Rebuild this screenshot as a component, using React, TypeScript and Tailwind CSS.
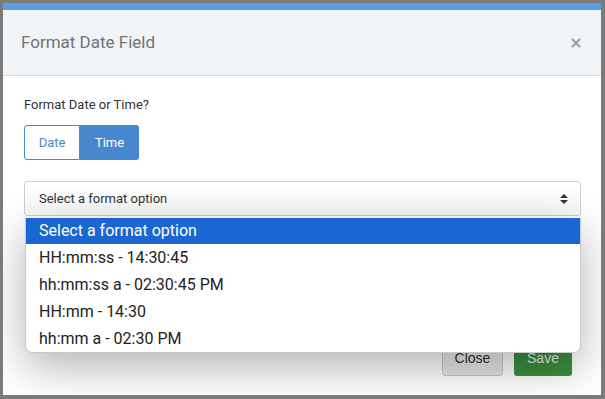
const options = [
  "HH:mm:ss - 14:30:45",
  "hh:mm:ss a - 02:30:45 PM",
  "HH:mm - 14:30",
  "hh:mm a - 02:30 PM",
];

const App = () => {
  return (
    <div className="w-[605px] h-[399px] bg-[#7b7b7b] pt-[3px] pl-[3px] pr-[4px] pb-[4px] overflow-hidden" style={{ fontFamily: "Roboto, 'Liberation Sans', sans-serif" }}>
      <div className="h-full bg-white flex flex-col relative overflow-hidden">
        <div className="h-[7px] bg-[#5b9de1]" />
        <div className="h-[66px] bg-[#f0f4f7] border-b border-[#d3d8dc] flex items-center justify-between pl-[18px] pr-[19px]">
          <span className="text-[17px] text-[#737373]">Format Date Field</span>
          <svg width="10" height="10" viewBox="0 0 10 10" className="mr-[1px]">
            <path d="M1 1 L9 9 M9 1 L1 9" stroke="#9a9a9a" strokeWidth="2" />
          </svg>
        </div>

        <div className="flex flex-col pl-[21px] pr-[20px] pt-[21px]">
          <div className="text-[13px] leading-4 text-[#333]">Format Date or Time?</div>
          <div className="flex mt-[12px]">
            <button className="h-[35px] w-[56px] border border-[#4a88cc] rounded-l-[3px] bg-white text-[13px] text-[#4a88cc]">Date</button>
            <button className="h-[35px] w-[59px] rounded-r-[3px] bg-[#4787ce] text-[13px] text-white">Time</button>
          </div>

          <div className="relative mt-[21px]">
            <div className="h-[35px] border border-[#cfcfcf] rounded-[3px] bg-gradient-to-b from-white to-[#f7f7f7] flex items-center justify-between pl-[14px] pr-[12px]">
              <span className="text-[13px] text-[#333]">Select a format option</span>
              <svg width="8" height="10" viewBox="0 0 8 10">
                <path d="M0 4 L4 0 L8 4 Z M0 6 L8 6 L4 10 Z" fill="#333" />
              </svg>
            </div>
            <div className="absolute top-[37px] left-[1px] right-0 bg-white rounded-b-[7px] overflow-hidden shadow-[0_14px_44px_rgba(0,0,0,0.3)] border-b border-x border-[#c8c8c8]">
              <div className="h-[26px] bg-[#1a66d2] text-white text-[16px] flex items-center pl-[13px]">Select a format option</div>
              {options.map((o) => (
                <div key={o} className="h-[27px] text-[16px] text-[#222] flex items-center pl-[13px]">{o}</div>
              ))}
            </div>
          </div>

          <div className="flex justify-end gap-[11px] mt-[124px] pr-[9px]" style={{ fontFamily: "'Liberation Sans', Arial, sans-serif" }}>
            <button className="h-[36px] w-[61px] border border-[#c8c8c8] rounded-[3px] bg-gradient-to-b from-[#f2f2f2] to-[#e4e4e4] text-[14px] text-[#333]">Close</button>
            <button className="h-[36px] w-[58px] rounded-[3px] bg-[#3b8f3f] text-[14px] text-[#e8f2e8]">Save</button>
          </div>
        </div>
      </div>
    </div>
  );
};

export default App;
